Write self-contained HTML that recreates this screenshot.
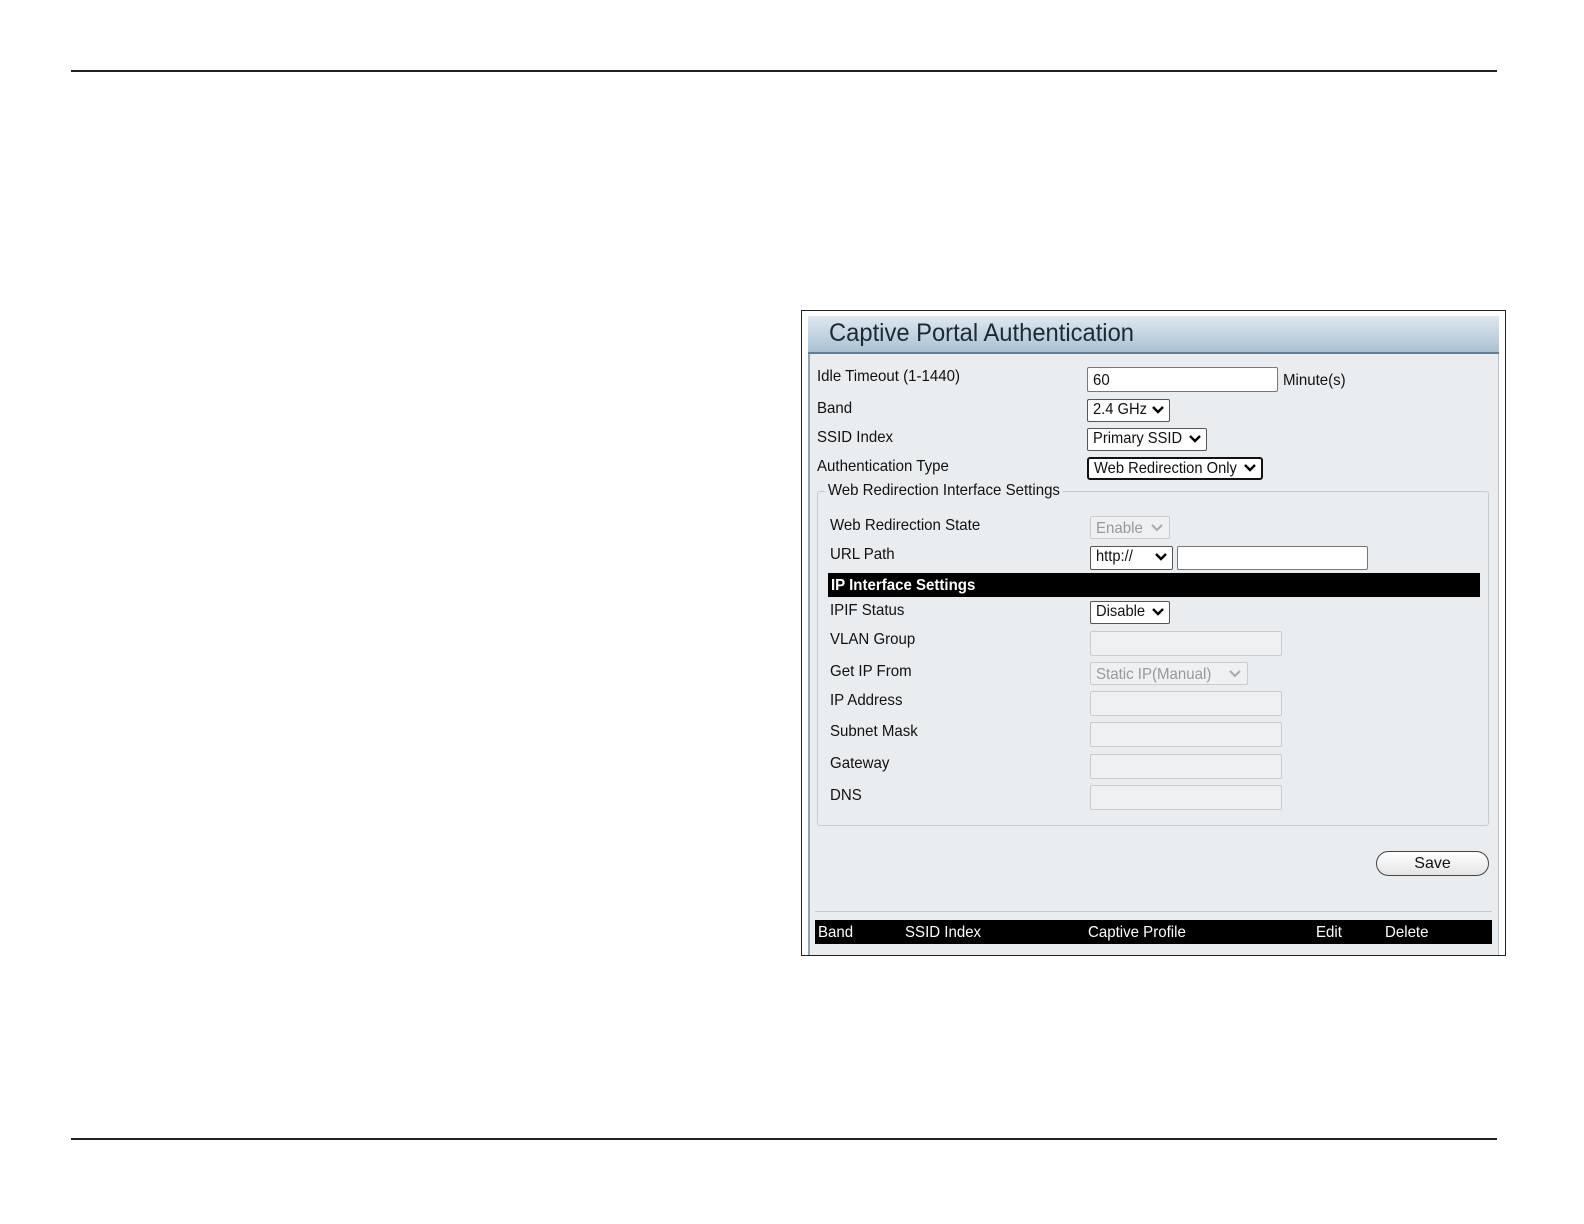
<!DOCTYPE html>
<html style="width:1584px;height:1224px;overflow:hidden"><head><meta charset="utf-8"><style>
*{margin:0;padding:0;box-sizing:border-box}
html,body{width:1584px;height:1224px;overflow:hidden}
body{background:#fff;position:relative;font-family:"Liberation Sans",sans-serif}
.a{position:absolute}
.t{position:absolute;font-size:16px;color:#111;white-space:nowrap;transform:scaleX(0.94);transform-origin:left top;line-height:18px}
.box{position:absolute;background:#fff;border:1px solid #777;border-radius:2px}
.dis{position:absolute;background:#eef0f2;border:1px solid #c8cccf;border-radius:2px}
.sel{position:absolute;background:#fff;border:1px solid #555;border-radius:2px;font-size:16px;line-height:20px;padding-left:5px;color:#111;white-space:nowrap;overflow:hidden}
.sel span{display:inline-block;transform:scaleX(0.92);transform-origin:left}
.sel svg{position:absolute;right:5px;top:6px}
.bar{position:absolute;background:#000;color:#fff;font-weight:bold}
</style></head><body>
<div class="a" style="left:71px;top:70px;width:1426px;height:2px;background:#222"></div>
<div class="a" style="left:71px;top:1138px;width:1426px;height:2px;background:#222"></div>

<div class="a" style="left:801px;top:310px;width:705px;height:646px;border:1px solid #222;background:#fff"></div>
<div class="a" style="left:808px;top:316px;width:691px;height:639px;background:#e9edf0;border-left:2px solid #8fa6b8;border-right:1px solid #b8c4cc"></div>
<div class="a" style="left:808px;top:316px;width:691px;height:38px;background:linear-gradient(#dfe8ef,#a9c1d3);border-bottom:2px solid #5d7f9a"></div>
<div class="a" style="left:829px;top:318px;font-size:25px;color:#1e2a33;line-height:30px;transform:scaleX(0.95);transform-origin:left">Captive Portal Authentication</div>

<div class="t" style="left:817px;top:368px">Idle Timeout (1-1440)</div>
<div class="box" style="left:1087px;top:367px;width:191px;height:25px"></div>
<div class="t" style="left:1093px;top:372px">60</div>
<div class="t" style="left:1283px;top:372px">Minute(s)</div>

<div class="t" style="left:817px;top:400px">Band</div>
<div class="sel" style="left:1087px;top:399px;width:83px;height:23px"><span>2.4 GHz</span><svg width="12" height="9"><path d="M1 1l5 5 5-5" stroke="#000" stroke-width="2.4" fill="none"/></svg></div>

<div class="t" style="left:817px;top:429px">SSID Index</div>
<div class="sel" style="left:1087px;top:428px;width:120px;height:23px"><span>Primary SSID</span><svg width="12" height="9"><path d="M1 1l5 5 5-5" stroke="#000" stroke-width="2.4" fill="none"/></svg></div>

<div class="t" style="left:817px;top:458px">Authentication Type</div>
<div class="sel" style="left:1087px;top:457px;width:176px;height:23px;border:2px solid #111;border-radius:3px;line-height:19px"><span>Web Redirection Only</span><svg width="12" height="9" style="top:5px"><path d="M1 1l5 5 5-5" stroke="#000" stroke-width="2.4" fill="none"/></svg></div>

<div class="a" style="left:817px;top:491px;width:672px;height:335px;border:1px solid #c4cacf;border-radius:3px"></div>
<div class="t" style="left:825px;top:482px;background:#e9edf0;padding:0 3px">Web Redirection Interface Settings</div>

<div class="t" style="left:830px;top:517px">Web Redirection State</div>
<div class="dis" style="left:1090px;top:516px;width:80px;height:23px"></div>
<div class="t" style="left:1096px;top:520px;color:#999">Enable</div>
<svg class="a" style="left:1151px;top:524px" width="12" height="9"><path d="M1 1l5 5 5-5" stroke="#aaa" stroke-width="2" fill="none"/></svg>

<div class="t" style="left:830px;top:546px">URL Path</div>
<div class="sel" style="left:1090px;top:546px;width:83px;height:24px"><span>http://</span><svg width="12" height="9"><path d="M1 1l5 5 5-5" stroke="#000" stroke-width="2.4" fill="none"/></svg></div>
<div class="box" style="left:1177px;top:546px;width:191px;height:24px"></div>

<div class="bar" style="left:828px;top:573px;width:652px;height:24px"></div>
<div class="t" style="left:831px;top:577px;color:#fff;font-weight:bold">IP Interface Settings</div>

<div class="t" style="left:830px;top:602px">IPIF Status</div>
<div class="sel" style="left:1090px;top:601px;width:80px;height:23px"><span>Disable</span><svg width="12" height="9"><path d="M1 1l5 5 5-5" stroke="#000" stroke-width="2.4" fill="none"/></svg></div>

<div class="t" style="left:830px;top:631px">VLAN Group</div>
<div class="dis" style="left:1090px;top:631px;width:192px;height:25px"></div>
<div class="t" style="left:830px;top:663px">Get IP From</div>
<div class="dis" style="left:1090px;top:662px;width:158px;height:23px"></div>
<div class="t" style="left:1096px;top:666px;color:#999">Static IP(Manual)</div>
<svg class="a" style="left:1229px;top:670px" width="12" height="9"><path d="M1 1l5 5 5-5" stroke="#aaa" stroke-width="2" fill="none"/></svg>
<div class="t" style="left:830px;top:692px">IP Address</div>
<div class="dis" style="left:1090px;top:691px;width:192px;height:25px"></div>
<div class="t" style="left:830px;top:723px">Subnet Mask</div>
<div class="dis" style="left:1090px;top:722px;width:192px;height:25px"></div>
<div class="t" style="left:830px;top:755px">Gateway</div>
<div class="dis" style="left:1090px;top:754px;width:192px;height:25px"></div>
<div class="t" style="left:830px;top:787px">DNS</div>
<div class="dis" style="left:1090px;top:785px;width:192px;height:25px"></div>

<div class="a" style="left:1376px;top:851px;width:113px;height:25px;border:1.5px solid #444;border-radius:13px;background:linear-gradient(#fff,#e4e4e4)"></div>
<div class="a" style="left:1376px;top:855px;width:113px;text-align:center;font-size:16px;color:#111">Save</div>

<div class="a" style="left:815px;top:911px;width:677px;height:10px;border-top:1px solid #c4cacf"></div>
<div class="bar" style="left:815px;top:920px;width:677px;height:24px"></div>
<div class="t" style="left:818px;top:924px;color:#fff">Band</div>
<div class="t" style="left:905px;top:924px;color:#fff">SSID Index</div>
<div class="t" style="left:1088px;top:924px;color:#fff">Captive Profile</div>
<div class="t" style="left:1316px;top:924px;color:#fff">Edit</div>
<div class="t" style="left:1385px;top:924px;color:#fff">Delete</div>
</body></html>
